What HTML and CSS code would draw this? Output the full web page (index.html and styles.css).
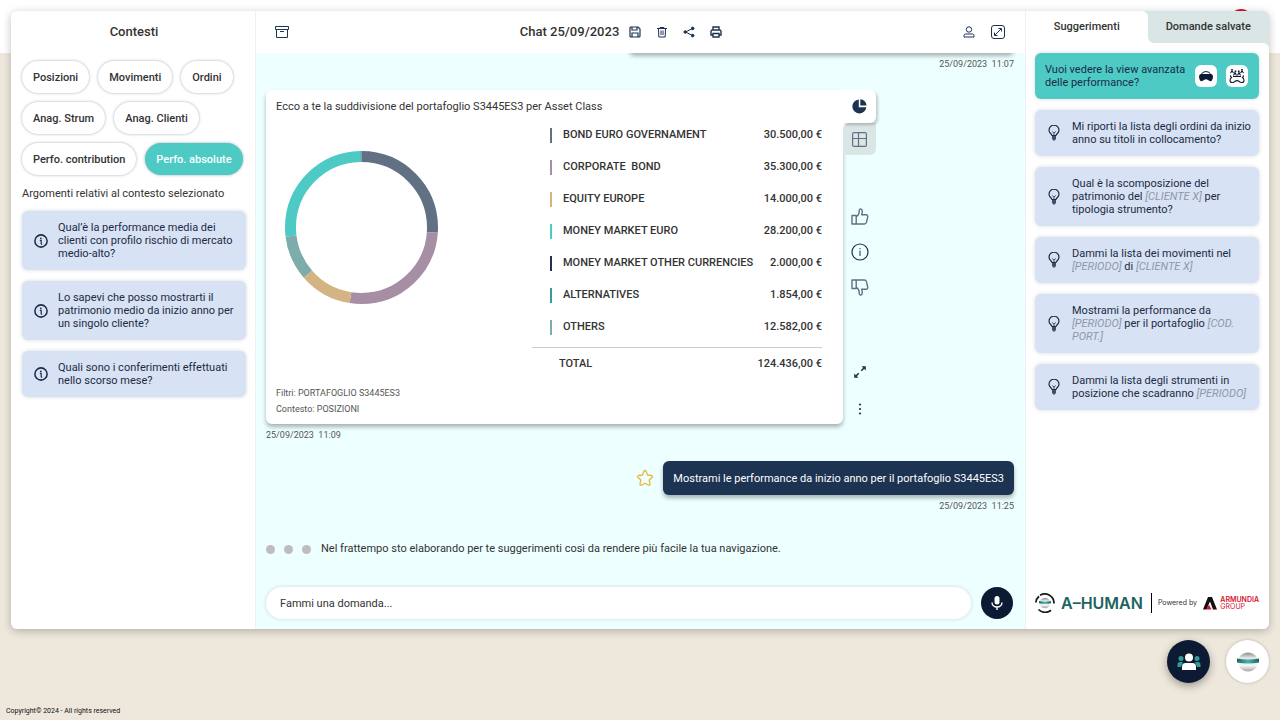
FILE: index.html
```
<!DOCTYPE html>
<html lang="it">
<head>
    <meta charset="utf-8">
    <meta name="viewport" content="width=device-width, initial-scale=1">
    <title>A-Human Chat</title>
    <link rel="stylesheet" href="styles.css">
</head>
<body>
    <!-- shared icons -->
    <svg class="icon-defs" aria-hidden="true">
        <symbol id="icon-info" viewBox="0 0 24 24">
            <circle cx="12" cy="12" r="10.500" fill="none" stroke="currentColor" stroke-width="2.600"/>
            <circle cx="11.700" cy="7.300" r="1.500" fill="currentColor"/>
            <path d="M10 11h2.300v6.500M12 17.500h2" fill="none" stroke="currentColor" stroke-width="2"/>
        </symbol>
        <symbol id="icon-bulb" viewBox="0 0 12 16">
            <path d="M4 10.500C3.800 9 1 8 1 5.200a5 5 0 0 1 10 0C11 8 8.200 9 8 10.500z" fill="none" stroke="currentColor" stroke-width="1.200" stroke-linecap="round"/>
            <path d="M4.200 6.500 6 8l1.800-1.500M6 8v2.500" fill="none" stroke="currentColor" stroke-width=".8"/>
            <path d="M4 10.500h4v3l-1 2H5l-1-2z" fill="currentColor" opacity=".8"/>
        </symbol>
        <symbol id="icon-thumb" viewBox="0 0 18 18">
            <path d="M1 7.500h4.200V16H1zM5.200 8.500C7.500 7.500 8.300 5.500 8.300 2.500c0-2.200 3-2 3 .7 0 1.600-.3 2.500-.6 3.600H15c1.400 0 2 .9 1.700 2.200l-1.300 5.400c-.3 1.100-1 1.600-2 1.600H5.200z" fill="none" stroke="currentColor" stroke-width="1.400" stroke-linejoin="round"/>
        </symbol>
        <linearGradient id="sphere" x2="0" y2="1">
            <stop offset="0" stop-color="#8b8b8b"/>
            <stop offset=".3" stop-color="#e8e8e8"/>
            <stop offset=".7" stop-color="#f4f4f4"/>
            <stop offset="1" stop-color="#a5a5a5"/>
        </linearGradient>
        <linearGradient id="band">
            <stop offset="0" stop-color="#1b6460"/>
            <stop offset=".5" stop-color="#43b5ab"/>
            <stop offset="1" stop-color="#1b6460"/>
        </linearGradient>
        <symbol id="icon-sphere" viewBox="0 0 22 20">
            <ellipse cx="11" cy="10" rx="10" ry="9.500" fill="url(#sphere)"/>
            <path d="M0 6.500q11 2 22 0v4q-11 2-22 0z" fill="url(#band)"/>
        </symbol>
    </svg>

    <span class="alert-dot"></span>

    <main class="window">
        <aside class="contexts">
            <h2 class="contexts-title">Contesti</h2>
            <div class="chips">
                <button class="chip">Posizioni</button>
                <button class="chip">Movimenti</button>
                <button class="chip">Ordini</button>
                <button class="chip">Anag. Strum</button>
                <button class="chip">Anag. Clienti</button>
                <button class="chip">Perfo. contribution</button>
                <button class="chip chip-active">Perfo. absolute</button>
            </div>
            <p class="contexts-label">Argomenti relativi al contesto selezionato</p>
            <div class="cards">
                <button class="card">
                    <svg class="card-icon"><use href="#icon-info"/></svg>
                    <span>Qual’è la performance media dei clienti con profilo rischio di mercato medio-alto?</span>
                </button>
                <button class="card">
                    <svg class="card-icon"><use href="#icon-info"/></svg>
                    <span>Lo sapevi che posso mostrarti il patrimonio medio da inizio anno per un singolo cliente?</span>
                </button>
                <button class="card">
                    <svg class="card-icon"><use href="#icon-info"/></svg>
                    <span>Quali sono i conferimenti effettuati nello scorso mese?</span>
                </button>
            </div>
        </aside>

        <section class="chat">
            <header class="chat-header">
                <button class="icon-button" aria-label="Archivio">
                    <svg width="14" height="14" viewBox="0 0 14 14" fill="none" stroke="currentColor"><path d="M.5 1.500h13v3H.5zM1.500 4.500v8h11v-8M5 6.500h4"/></svg>
                </button>
                <div class="chat-tools chat-tools-main">
                    <h1 class="chat-title">Chat 25/09/2023</h1>
                    <button class="icon-button" aria-label="Salva">
                        <svg width="12" height="12" viewBox="0 0 12 12" fill="none" stroke="currentColor" stroke-width="1.200"><path d="M1 2q0-1 1-1h7l2 2v7q0 1-1 1H2q-1 0-1-1zM3 1v3h5V1M3 11V7h6v4"/></svg>
                    </button>
                    <button class="icon-button" aria-label="Elimina">
                        <svg width="12" height="12" viewBox="0 0 12 12" fill="none" stroke="currentColor"><path d="M1 2.500h10M4 2.500v-1h4v1M2.500 2.500l.3 8.500h6.400l.3-8.500M5 4.500v4.500M7 4.500v4.500"/></svg>
                    </button>
                    <button class="icon-button" aria-label="Condividi">
                        <svg width="12" height="12" viewBox="0 0 12 12" fill="currentColor" stroke="currentColor"><path d="M9.500 2.500 2.500 6l7 3.500" fill="none"/><circle cx="9.700" cy="2.400" r="1.300"/><circle cx="2.300" cy="6" r="1.300"/><circle cx="9.700" cy="9.600" r="1.300"/></svg>
                    </button>
                    <button class="icon-button" aria-label="Stampa">
                        <svg width="12" height="12" viewBox="0 0 12 12" fill="none" stroke="currentColor" stroke-width="1.400"><path d="M3 4V1h6v3M3 9H1V5.500Q1 4 2.500 4h7Q11 4 11 5.500V9H9M3 7.500h6V11H3z"/></svg>
                    </button>
                </div>
                <div class="chat-tools">
                    <button class="icon-button" aria-label="Profilo">
                        <svg width="12" height="12" viewBox="0 0 12 12" fill="none" stroke="currentColor"><circle cx="6" cy="3.500" r="2.700"/><path d="M1 11V9.500Q1 8 2.500 8h7Q11 8 11 9.500V11z"/></svg>
                    </button>
                    <button class="icon-button" aria-label="Espandi">
                        <svg width="14" height="14" viewBox="0 0 14 14" fill="none" stroke="currentColor"><rect x=".5" y=".5" width="13" height="13" rx="2.500"/><path d="M4 10l6-6M7.500 3.500h3v3M6.500 10.500h-3v-3"/></svg>
                    </button>
                </div>
            </header>

            <div class="messages">
                <div class="message message-user">
                    <div class="bubble bubble-long"></div>
                    <time class="timestamp">25/09/2023 &nbsp;11:07</time>
                </div>

                <div class="message">
                    <div class="answer">
                        <article class="answer-body">
                            <p class="answer-title">Ecco a te la suddivisione del portafoglio S3445ES3 per Asset Class</p>
                            <div class="answer-data">
                                <svg class="donut" viewBox="0 0 153 153" role="img" aria-label="Suddivisione per Asset Class">
                                    <g fill="none" stroke-width="11" transform="rotate(-90 76.500 76.500)">
                                        <circle cx="76.500" cy="76.500" r="71" pathLength="360" stroke="#617082" stroke-dasharray="94 266"/>
                                        <circle cx="76.500" cy="76.500" r="71" pathLength="360" stroke="#a68fa5" stroke-dasharray="95 265" stroke-dashoffset="-94"/>
                                        <circle cx="76.500" cy="76.500" r="71" pathLength="360" stroke="#d4b483" stroke-dasharray="40 320" stroke-dashoffset="-189"/>
                                        <circle cx="76.500" cy="76.500" r="71" pathLength="360" stroke="#7eacab" stroke-dasharray="34 326" stroke-dashoffset="-229"/>
                                        <circle cx="76.500" cy="76.500" r="71" pathLength="360" stroke="#4dcac4" stroke-dasharray="96 264" stroke-dashoffset="-263"/>
                                        <circle cx="76.500" cy="76.500" r="71" pathLength="360" stroke="#379a9c" stroke-dasharray="1 359" stroke-dashoffset="-359"/>
                                    </g>
                                </svg>
                                <table class="assets">
                                    <tbody>
                                        <tr><td class="key"><i class="bar bar-slate"></i></td><td>BOND EURO GOVERNAMENT</td><td class="amount">30.500,00 €</td></tr>
                                        <tr><td class="key"><i class="bar bar-mauve"></i></td><td>CORPORATE &nbsp;BOND</td><td class="amount">35.300,00 €</td></tr>
                                        <tr><td class="key"><i class="bar bar-sand"></i></td><td>EQUITY EUROPE</td><td class="amount">14.000,00 €</td></tr>
                                        <tr><td class="key"><i class="bar bar-aqua"></i></td><td>MONEY MARKET EURO</td><td class="amount">28.200,00 €</td></tr>
                                        <tr><td class="key"><i class="bar bar-navy"></i></td><td>MONEY MARKET OTHER CURRENCIES</td><td class="amount">2.000,00 €</td></tr>
                                        <tr><td class="key"><i class="bar bar-teal"></i></td><td>ALTERNATIVES</td><td class="amount">1.854,00 €</td></tr>
                                        <tr><td class="key"><i class="bar bar-sage"></i></td><td>OTHERS</td><td class="amount">12.582,00 €</td></tr>
                                    </tbody>
                                    <tfoot>
                                        <tr><td class="total" colspan="2">TOTAL</td><td class="amount">124.436,00 €</td></tr>
                                    </tfoot>
                                </table>
                            </div>
                            <p class="answer-note">Filtri: PORTAFOGLIO S3445ES3</p>
                            <p class="answer-note">Contesto: POSIZIONI</p>
                        </article>
                        <div class="answer-side">
                            <button class="view-tab view-tab-active" aria-label="Grafico">
                                <svg width="15" height="15" viewBox="0 0 15 15" fill="currentColor"><path d="M6.800.5A7 7 0 1 0 14.300 8.200H6.800z"/><path d="M8.300.3v6.200h6.200A6.300 6.300 0 0 0 8.300.3z"/></svg>
                            </button>
                            <div class="view-tab-wrap">
                                <button class="view-tab" aria-label="Tabella">
                                    <svg width="15" height="15" viewBox="0 0 15 15" fill="none" stroke="currentColor" stroke-width="1.200"><rect x=".6" y=".6" width="13.800" height="13.800" rx="1.500"/><path d="M6.500.5v14M.5 6.500h14"/></svg>
                                </button>
                            </div>
                            <div class="feedback">
                                <button class="icon-button muted" aria-label="Mi piace"><svg width="18" height="18"><use href="#icon-thumb"/></svg></button>
                                <button class="icon-button" aria-label="Informazioni">
                                    <svg width="18" height="18" viewBox="0 0 18 18" fill="none" stroke="currentColor"><circle cx="9" cy="9" r="8" stroke-width="1.200"/><path d="M9 7.500V13M9 5v1.200"/></svg>
                                </button>
                                <button class="icon-button muted" aria-label="Non mi piace"><svg class="flip" width="18" height="18"><use href="#icon-thumb"/></svg></button>
                            </div>
                            <div class="answer-actions">
                                <button class="icon-button" aria-label="Ingrandisci">
                                    <svg width="14" height="14" viewBox="0 0 14 14" fill="currentColor" stroke="currentColor" stroke-width="1.600"><path d="M8.300 5.700 11 3M5.700 8.300 3 11" fill="none"/><path d="M8.500 1.200h4.300v4.300zM5.500 12.800H1.200V8.500z" stroke="none"/></svg>
                                </button>
                                <button class="icon-button" aria-label="Altro">
                                    <svg width="14" height="14" viewBox="0 0 14 14" fill="currentColor"><circle cx="7" cy="2.500" r="1.100"/><circle cx="7" cy="7" r="1.100"/><circle cx="7" cy="11.500" r="1.100"/></svg>
                                </button>
                            </div>
                        </div>
                    </div>
                    <time class="timestamp">25/09/2023 &nbsp;11:09</time>
                </div>

                <div class="message message-user">
                    <div class="bubble-row">
                        <button class="icon-button star" aria-label="Salva domanda">
                            <svg width="18" height="18" viewBox="0 0 18 18" fill="none" stroke="currentColor" stroke-width="1.300" stroke-linejoin="round"><path d="M9 1.500q.8 0 1.200 1L11.500 6l4 .5q1.500.5.700 1.700L13.200 11l.8 4q0 1.500-1.500 1.200L9 14.200l-3.500 2Q4 16.500 4 15l.8-4L1.800 8.200Q1 7 2.500 6.500l4-.5 1.300-3.500q.4-1 1.200-1z"/></svg>
                        </button>
                        <div class="bubble">Mostrami le performance da inizio anno per il portafoglio S3445ES3</div>
                    </div>
                    <time class="timestamp">25/09/2023 &nbsp;11:25</time>
                </div>

                <div class="typing">
                    <span class="dots"><i class="dot"></i><i class="dot"></i><i class="dot"></i></span>
                    <p>Nel frattempo sto elaborando per te suggerimenti così da rendere più facile la tua navigazione.</p>
                </div>
            </div>

            <form class="composer">
                <input class="composer-input" type="text" aria-label="Domanda" placeholder="Fammi una domanda...">
                <button class="mic" type="button" aria-label="Microfono">
                    <svg width="14" height="16" viewBox="0 0 14 16" fill="none" stroke="currentColor" stroke-width="1.400"><rect x="4.500" y="1" width="5" height="8.500" rx="2.500" fill="currentColor" stroke="none"/><path d="M2 7.500a5 4.500 0 0 0 10 0M7 12v3"/></svg>
                </button>
            </form>
        </section>

        <aside class="suggestions">
            <div class="tabs">
                <button class="tab tab-active">Suggerimenti</button>
                <div class="tab-wrap"><button class="tab">Domande salvate</button></div>
            </div>
            <div class="suggestions-panel">
                <div class="cards">
                    <div class="card card-advanced">
                        <span>Vuoi vedere la view avanzata delle performance?</span>
                        <button class="view-button" aria-label="Visore">
                            <svg width="14" height="12" viewBox="0 0 14 12"><path d="M2 5Q3 1.500 7 1.500T12 5" fill="none" stroke="currentColor"/><path d="M2 4h10q2 0 2 2.500T12.500 11q-2 .5-3.500-1-2-1.500-4 0-1.500 1.500-3.500 1Q0 9 0 6.500T2 4z" fill="currentColor"/></svg>
                        </button>
                        <button class="view-button" aria-label="Visione condivisa">
                            <svg width="16" height="16" viewBox="0 0 16 16" fill="none" stroke="currentColor" stroke-width="1.100"><path d="M2 7.500q-1 1 .5 2-1.500 1-1.500 3 0 2 2.200 2 1.800 0 2.800-1.200 2-1.300 4 0 1 1.200 2.800 1.200 2.200 0 2.200-2 0-2-1.500-3 1.500-1 .5-2M4 8.500h8"/><path d="M1.500 5 3 3l1.500 2M11.500 5 13 3l1.500 2M4.500 7.500l1.500-3 1.500 3M8.500 7.500l1.500-3 1.500 3"/><path d="M3 1v1.500M6.500 2.500v1.500M9.700 2.500v1.500M13 1v1.500" stroke-width="1.600"/></svg>
                        </button>
                    </div>
                    <button class="card">
                        <svg class="card-icon card-bulb"><use href="#icon-bulb"/></svg>
                        <span>Mi riporti la lista degli ordini da inizio anno su titoli in collocamento?</span>
                    </button>
                    <button class="card">
                        <svg class="card-icon card-bulb"><use href="#icon-bulb"/></svg>
                        <span>Qual è la scomposizione del patrimonio del <em>[CLIENTE X]</em> per tipologia strumento?</span>
                    </button>
                    <button class="card">
                        <svg class="card-icon card-bulb"><use href="#icon-bulb"/></svg>
                        <span>Dammi la lista dei movimenti nel <em>[PERIODO]</em> di <em>[CLIENTE X]</em></span>
                    </button>
                    <button class="card">
                        <svg class="card-icon card-bulb"><use href="#icon-bulb"/></svg>
                        <span>Mostrami la performance da <em>[PERIODO]</em> per il portafoglio <em>[COD. PORT.]</em></span>
                    </button>
                    <button class="card">
                        <svg class="card-icon card-bulb"><use href="#icon-bulb"/></svg>
                        <span>Dammi la lista degli strumenti in posizione che scadranno <em>[PERIODO]</em></span>
                    </button>
                </div>
                <div class="brand">
                    <svg width="20" height="20" viewBox="0 0 20 20">
                        <g fill="none" stroke="#1d1d1b" stroke-width="1.800"><path d="M.9 9.500A9.200 9.200 0 0 1 4 3.200M5 2.300A9.200 9.200 0 0 1 19 10.500M3.500 16.500A9.200 9.200 0 0 0 16 17.200"/></g>
                        <use href="#icon-sphere" x="4" y="4.500" width="12" height="11"/>
                    </svg>
                    <strong class="brand-name">A–HUMAN</strong>
                    <span class="brand-powered">Powered by</span>
                    <svg width="14" height="13" viewBox="0 0 14 13"><path d="M5 0h4l5 12.500h-4L7 4.500 3.500 12.500H0z" fill="#111"/><path d="M6.200 8 8.500 12.500H3.600Q4 9 6.200 8z" fill="#e2102c"/></svg>
                    <span class="brand-group"><b>ARMUNDIA</b><span>GROUP</span></span>
                </div>
            </div>
        </aside>
    </main>

    <div class="launchers">
        <button class="launcher launcher-team" aria-label="Team">
            <svg width="24" height="18" viewBox="0 0 24 18"><g fill="#2f9c98"><circle cx="4" cy="5.500" r="2.500"/><circle cx="20" cy="5.500" r="2.500"/><path d="M.5 14v-2.500Q.5 9 3 9h3l-2 5zM23.500 14v-2.500Q23.500 9 21 9h-3l2 5z"/></g><circle cx="12" cy="4.500" r="4" fill="#fff"/><path d="M5 17v-3.500Q5 10 8.500 10h7q3.500 0 3.500 3.500V17z" fill="#fff"/></svg>
        </button>
        <button class="launcher" aria-label="A-Human">
            <svg width="22" height="20"><use href="#icon-sphere"/></svg>
        </button>
    </div>

    <footer class="copyright">Copyright© 2024 - All rights reserved</footer>
</body>
</html>
```
FILE: styles.css
```
* {
    box-sizing: border-box;
}
body {
    margin: 0;
    height: 100vh;
    display: flex;
    flex-direction: column;
    position: relative;
    font-family: Roboto, "Liberation Sans", sans-serif;
    font-size: 11px;
    line-height: 16px;
    color: #333;
    background: linear-gradient(#fff 53px, #eee7dc 53px);
}
p, h1, h2 {
    margin: 0;
}
button {
    font: inherit;
    color: inherit;
    border: 0;
    padding: 0;
    background: none;
    cursor: pointer;
}
svg {
    display: block;
    flex: none;
}
.icon-defs {
    position: absolute;
    width: 0;
    height: 0;
}
.alert-dot {
    position: absolute;
    top: 9px;
    right: 28px;
    width: 22px;
    height: 22px;
    border-radius: 50%;
    background: #d6132d;
}

/* window */
.window {
    flex: 1;
    min-height: 0;
    margin: 11px 11px 0;
    display: grid;
    grid-template-columns: 245px 1fr 244px;
    grid-template-rows: minmax(0, 1fr);
    position: relative;
    border-radius: 6px;
    overflow: hidden;
    background: #fff;
    box-shadow: 0 2px 8px rgba(0, 0, 0, 0.25);
}

/* left column */
.contexts {
    padding: 0 9px 11px 11px;
    border-right: 1px solid #eef0f1;
}
.contexts-title, .chat-title {
    font-size: 13px;
    font-weight: 500;
    line-height: 41px;
    color: #333;
}
.contexts-title {
    text-align: center;
}
.chips {
    display: flex;
    flex-wrap: wrap;
    gap: 9px;
    margin-top: 9px;
}
.chip {
    height: 32px;
    padding: 1px 11px 0;
    border-radius: 16px;
    font-weight: 500;
    background: #fff;
    box-shadow: 0 0 3px rgba(28, 51, 82, 0.4);
}
.chip-active {
    color: #fff;
    background: #4dcac4;
}
.contexts-label {
    margin: 11px 0 9px;
}
.cards {
    display: flex;
    flex-direction: column;
    gap: 11px;
}
.card {
    display: flex;
    align-items: center;
    gap: 10px;
    padding: 10px 6px 10px 12px;
    border-radius: 6px;
    text-align: left;
    line-height: 13px;
    color: #1c2b45;
    background: #d7e2f4;
    box-shadow: 0 0 4px rgba(0, 0, 0, 0.15);
}
.card-icon {
    width: 14px;
    height: 14px;
}
.card-bulb {
    height: 16px;
}
.card em {
    color: #8e99aa;
}

/* chat */
.chat {
    display: flex;
    flex-direction: column;
    min-width: 0;
    background: #edffff;
}
.chat-header {
    flex: none;
    display: flex;
    justify-content: space-between;
    align-items: flex-start;
    height: 42px;
    padding: 0 20px 0 19px;
    background: #fff;
}
.chat-header > .icon-button {
    padding-top: 14px;
}
.chat-tools {
    display: flex;
    align-items: center;
    gap: 16px;
    height: 41px;
}
.chat-tools-main {
    gap: 15px;
    margin-right: 10px;
}
.chat-title {
    margin-right: -5px;
}
.icon-button {
    display: block;
    color: #1c3352;
}
.muted {
    color: #617082;
}
.messages {
    flex: 1;
    min-height: 0;
    display: flex;
    flex-direction: column;
    justify-content: flex-end;
    gap: 18px;
    overflow: hidden;
    padding: 0 11px 10px 10px;
}
.message {
    flex: none;
    display: flex;
    flex-direction: column;
    gap: 3px;
}
.message-user {
    align-items: flex-end;
}
.timestamp {
    font-size: 9px;
    color: #555;
}
.bubble-row {
    display: flex;
    align-items: center;
    gap: 9px;
}
.bubble {
    padding: 10px 10px 8px;
    min-height: 34px;
    border-radius: 6px;
    color: #fff;
    background: #1c3352;
    box-shadow: 0 3px 4px rgba(0, 0, 0, 0.3);
}
.bubble-long {
    width: 385px;
}
.star {
    color: #e9b83c;
}
.answer {
    display: flex;
    margin-right: 138px;
}
.answer-body {
    flex: 1;
    padding: 9px 21px 7px 10px;
    border-radius: 6px 0 6px 6px;
    background: #fff;
    box-shadow: 0 3px 4px rgba(0, 0, 0, 0.3);
}
.answer-data {
    display: flex;
    justify-content: space-between;
    align-items: flex-start;
    margin: 4px 0 5px;
    padding-left: 9px;
}
.donut {
    width: 153px;
    height: 153px;
    margin-top: 32px;
}
.assets {
    width: 290px;
    border-collapse: collapse;
    font-weight: 500;
    line-height: 32px;
}
.assets td {
    padding: 0;
}
.assets .key {
    width: 31px;
    padding: 0 0 0 18px;
    line-height: 0;
}
.bar {
    display: inline-block;
    width: 2px;
    height: 15px;
}
.bar-slate { background: #617082; }
.bar-mauve { background: #a68fa5; }
.bar-sand { background: #d4b483; }
.bar-aqua { background: #4dcac4; }
.bar-navy { background: #1c3352; }
.bar-teal { background: #379a9c; }
.bar-sage { background: #7eacab; }
.assets .amount {
    text-align: right;
}
.assets tbody tr:last-child td {
    padding-bottom: 4px;
}
.assets tfoot td {
    border-top: 1px solid #ccc;
}
.assets .total {
    padding-left: 27px;
}
.answer-note {
    font-size: 9px;
    color: #555;
}
.answer-side {
    display: flex;
    flex-direction: column;
    width: 33px;
}
.view-tab {
    display: flex;
    align-items: center;
    justify-content: center;
    width: 100%;
    height: 32px;
    color: #617082;
    border-radius: 6px 0 6px 0;
    background: #dae5e6;
}
.view-tab-active {
    height: 33px;
    color: #1c3352;
    border-radius: 0 6px 6px 0;
    background: #fff;
    box-shadow: 2px 2px 3px rgba(0, 0, 0, 0.2);
    position: relative;
}
.feedback, .answer-actions {
    display: flex;
    flex-direction: column;
    align-items: center;
    gap: 17px;
}
.feedback {
    margin-top: 53px;
}
.answer-actions {
    gap: 23px;
    margin-top: auto;
    padding-bottom: 8px;
}
.flip {
    transform: scaleY(-1);
}
.typing {
    flex: none;
    display: flex;
    align-items: center;
    gap: 10px;
    height: 34px;
}
.dots {
    display: flex;
    gap: 9px;
}
.dot {
    width: 9px;
    height: 9px;
    border-radius: 50%;
    background: #bdbdbd;
}
.composer {
    flex: none;
    display: flex;
    gap: 10px;
    padding: 11px 12px 10px 10px;
}
.composer-input {
    flex: 1;
    min-width: 0;
    height: 32px;
    padding: 0 14px;
    border: 0;
    border-radius: 16px;
    font: inherit;
    color: #333;
    background: #fff;
    box-shadow: 0 0 4px rgba(0, 0, 0, 0.15);
}
.composer-input::placeholder {
    color: #333;
    opacity: 1;
}
.mic {
    display: flex;
    align-items: center;
    justify-content: center;
    width: 32px;
    height: 32px;
    border-radius: 50%;
    color: #fff;
    background: #0c1a33;
}

/* right column */
.suggestions {
    display: flex;
    flex-direction: column;
    border-left: 1px solid #eef0f1;
    background: #dae5e6;
}
.tabs {
    display: grid;
    grid-template-columns: 1fr 1fr;
}
.tab {
    width: 100%;
    height: 32px;
    font-weight: 500;
    border-radius: 0 0 0 6px;
    background: #dae5e6;
}
.tab-active {
    border-radius: 0 6px 0 0;
    background: #fff;
}
.tab-wrap, .view-tab-wrap {
    background: linear-gradient(90deg, #fff 50%, transparent 50%);
}
.suggestions-panel {
    flex: 1;
    display: flex;
    flex-direction: column;
    justify-content: space-between;
    padding: 10px 10px 16px 9px;
    border-radius: 0 6px 0 0;
    background: #fff;
}
.suggestions .card {
    gap: 11px;
}
.suggestions .card-advanced {
    gap: 9px;
    padding: 10px 11px 10px 10px;
    background: #4dcac4;
}
.card-advanced span {
    flex: 1;
}
.view-button {
    display: flex;
    align-items: center;
    justify-content: center;
    width: 22px;
    height: 22px;
    border-radius: 6px;
    color: #0c1a33;
    background: #fff;
}
.brand {
    display: flex;
    align-items: center;
    height: 20px;
    font-family: Inter, "Open Sans", sans-serif;
    font-size: 7px;
}
.brand-name {
    margin: 0 8px 0 6px;
    font-size: 16px;
    font-weight: 600;
    color: #1b6460;
}
.brand-powered {
    flex: 1;
    padding-left: 6px;
    border-left: 1px solid #000;
    line-height: 20px;
    white-space: nowrap;
}
.brand-group {
    display: flex;
    flex-direction: column;
    margin-left: 3px;
    line-height: 7px;
    color: #d6132d;
}
.brand-group b {
    font-weight: 600;
}

/* page bottom */
.launchers {
    flex: none;
    display: flex;
    justify-content: flex-end;
    gap: 16px;
    padding: 11px 11px 20px;
}
.launcher {
    display: flex;
    align-items: center;
    justify-content: center;
    width: 43px;
    height: 43px;
    border-radius: 50%;
    background: #fff;
    box-shadow: 0 0 3px rgba(0, 0, 0, 0.25);
}
.launcher-team {
    background: #0c1a33;
    box-shadow: 0 3px 8px rgba(0, 0, 0, 0.35);
}
.copyright {
    padding-left: 6px;
    font-size: 7px;
    line-height: 17px;
    color: #111;
}
```
